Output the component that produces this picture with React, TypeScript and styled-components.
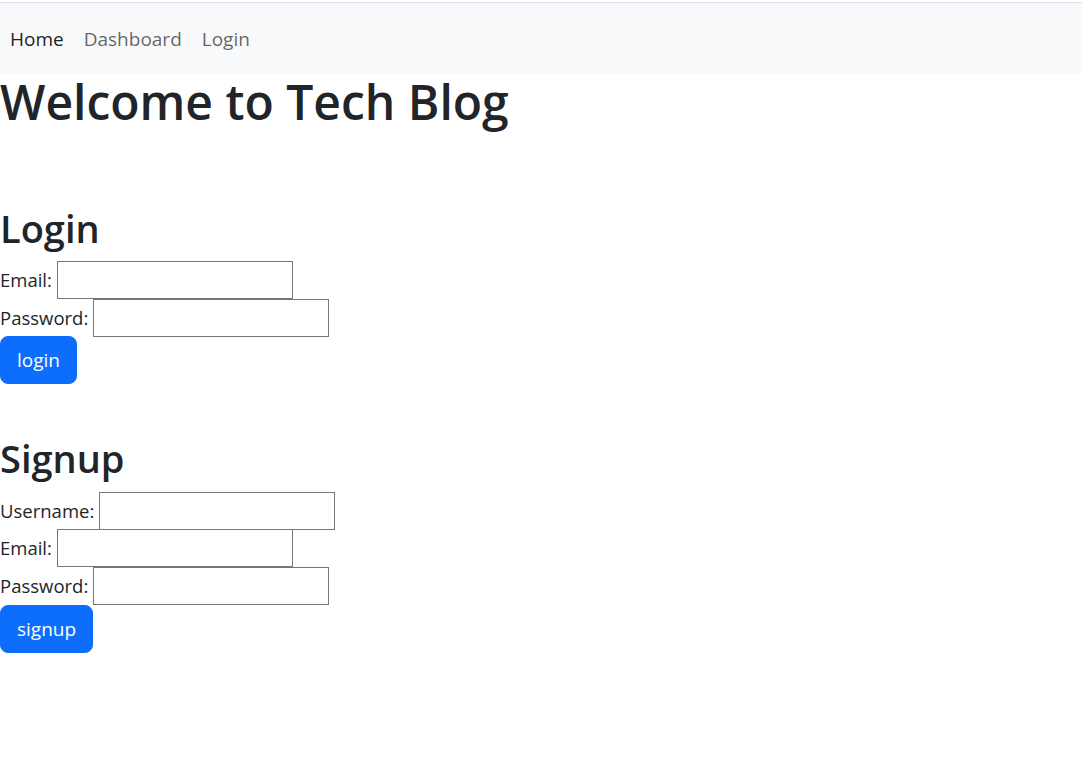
import React from "react";
import styled, { createGlobalStyle } from "styled-components";

const Global = createGlobalStyle`
  html, body { margin: 0; padding: 0; background: #fff; }
  body {
    font-family: "Open Sans", "Noto Sans", sans-serif;
    font-size: 18.5px;
    line-height: 1.5;
    color: #212529;
  }
  * { box-sizing: border-box; }
`;

const TopRule = styled.div`
  height: 3px;
  border-top: 2px solid #fff;
  background: #dee2e6;
`;

const Navbar = styled.nav`
  background: #f8f9fa;
  height: 70px;
  padding-top: 2px;
  display: flex;
  align-items: center;
`;

const NavLink = styled.a<{ $active?: boolean }>`
  padding: 0 10px;
  font-size: 19px;
  color: ${(p) => (p.$active ? "rgba(0,0,0,0.9)" : "rgba(0,0,0,0.62)")};
  text-decoration: none;
`;

const Title = styled.h1`
  margin: 0;
  font-size: 48px;
  font-weight: 600;
  line-height: 1.2;
`;

const Section = styled.section<{ $gap: number }>`
  margin-top: ${(p) => p.$gap}px;
`;

const SectionTitle = styled.h2`
  margin: 0 0 10px;
  font-size: 38px;
  font-weight: 600;
  line-height: 1.2;
`;

const Row = styled.div`
  display: flex;
  align-items: center;
  height: 37.6px;
`;

const Label = styled.label`
  margin-right: 5px;
`;

const Input = styled.input`
  width: 236px;
  height: 38px;
  border: 1px solid #767676;
  border-radius: 0;
  padding: 2px 4px;
  font: inherit;
  background: #fff;
`;

const Button = styled.button`
  display: block;
  height: 48px;
  padding: 0 16px;
  border: 1px solid #0d6efd;
  border-radius: 8px;
  background: #0d6efd;
  color: #fff;
  font-family: inherit;
  font-size: 19px;
`;

export default function App() {
  return (
    <>
      <Global />
      <TopRule />
      <Navbar>
        <NavLink $active href="#">Home</NavLink>
        <NavLink href="#">Dashboard</NavLink>
        <NavLink href="#">Login</NavLink>
      </Navbar>
      <Title>Welcome to Tech Blog</Title>
      <Section $gap={75}>
        <SectionTitle>Login</SectionTitle>
        <Row><Label>Email:</Label><Input type="email" /></Row>
        <Row><Label>Password:</Label><Input type="password" /></Row>
        <Button>login</Button>
      </Section>
      <Section $gap={52}>
        <SectionTitle>Signup</SectionTitle>
        <Row><Label>Username:</Label><Input type="text" /></Row>
        <Row><Label>Email:</Label><Input type="email" /></Row>
        <Row><Label>Password:</Label><Input type="password" /></Row>
        <Button>signup</Button>
      </Section>
    </>
  );
}
